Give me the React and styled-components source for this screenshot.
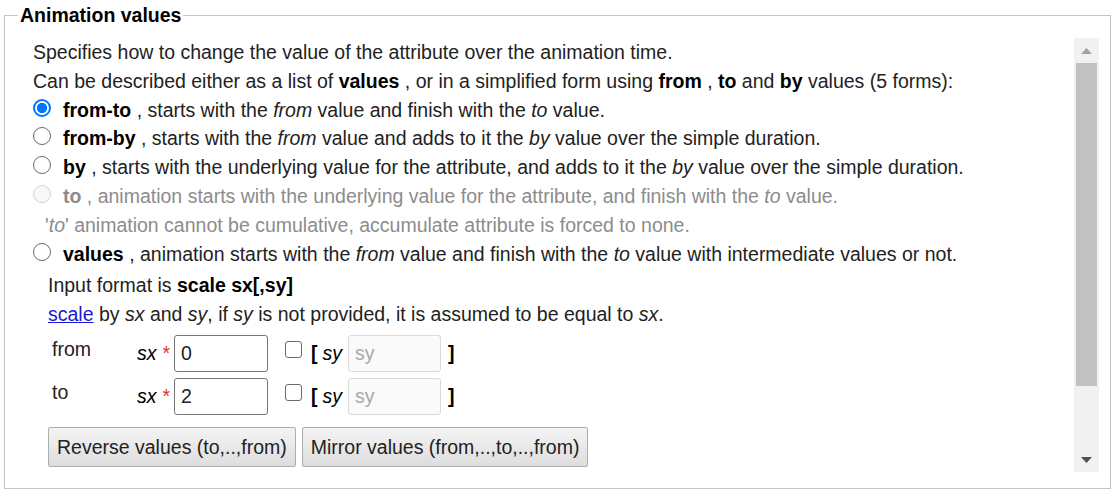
import React from "react";
import styled, { createGlobalStyle } from "styled-components";

const GlobalStyle = createGlobalStyle`
  html, body {
    margin: 0;
    padding: 0;
    background: #ffffff;
  }
  body {
    font-family: "Liberation Sans", Arial, sans-serif;
    font-size: 19.5px;
    color: #222222;
  }
`;

const Fieldset = styled.fieldset`
  margin: 0 5px 0 4px;
  padding: 8px 11px 16px 0;
  border: 1px solid #c4c4c4;
  min-width: 0;
`;

const Legend = styled.legend`
  margin-left: 13px;
  padding: 0 2px;
  font-weight: bold;
  line-height: 30px;
  color: #000;
`;

const ScrollArea = styled.div`
  display: flex;
  height: 434px;
`;

const Content = styled.div`
  flex: 1;
  overflow: hidden;
  padding-left: 28px;
  line-height: 28.8px;
`;

const Line = styled.div`
  white-space: nowrap;
  color: ${(p) => (p.$muted ? "#8c8c8c" : "#222222")};
  padding-left: ${(p) => p.$indent || 0}px;
`;

const Strong = styled.b`
  color: ${(p) => (p.$muted ? "#8c8c8c" : "#000")};
`;

const RadioRow = styled.label`
  display: flex;
  align-items: flex-start;
  white-space: nowrap;
  color: ${(p) => (p.$muted ? "#8c8c8c" : "#222222")};
`;

const RadioMark = styled.span`
  box-sizing: border-box;
  display: block;
  width: 18px;
  height: 18px;
  margin: 3px 12px 0 0;
  flex: none;
  border-radius: 50%;
  border: 1px solid ${(p) => (p.$disabled ? "#d4d4d4" : "#6a6a6a")};
  background: ${(p) => (p.$disabled ? "#f8f8f8" : "#fff")};
  ${(p) =>
    p.$checked &&
    `
    border: 2px solid #0075ff;
    background: radial-gradient(circle, #0075ff 0 4.8px, #fff 5.4px);
  `}
`;

const Details = styled.div`
  margin-top: 3px;
  padding-left: 15px;
`;

const Link = styled.a`
  color: #1a1ad6;
  text-decoration: underline;
`;

const FormRow = styled.div`
  display: flex;
  align-items: center;
  height: 37px;
  margin-top: ${(p) => p.$top}px;
  padding-left: 4px;
`;

const RowLabel = styled.span`
  align-self: flex-start;
  width: 85px;
  line-height: 28.8px;
`;

const Var = styled.i`
  color: #000;
`;

const Star = styled.span`
  color: #e8302a;
  margin: 0 4px 0 6px;
`;

const TextBox = styled.input`
  box-sizing: border-box;
  width: ${(p) => p.$w || 94}px;
  height: 37px;
  margin: 0 0 0 ${(p) => p.$l || 0}px;
  padding: 0 6px;
  border: 1px solid ${(p) => (p.disabled ? "#dadada" : "#767676")};
  border-radius: 3px;
  font: inherit;
  color: #222;
  background: ${(p) => (p.disabled ? "#fafafa" : "#fff")};
  &::placeholder {
    color: #a8a8a8;
  }
`;

const CheckMark = styled.span`
  box-sizing: border-box;
  display: block;
  align-self: flex-start;
  flex: none;
  width: 17px;
  height: 17px;
  margin: 6px 9px 0 17px;
  border: 1px solid #6a6a6a;
  border-radius: 3px;
  background: #fff;
`;

const Bracket = styled.b`
  color: #000;
  margin-right: ${(p) => p.$r || 0}px;
  margin-left: ${(p) => p.$l || 0}px;
`;

const ButtonRow = styled.div`
  display: flex;
  gap: 6px;
  margin-top: 12px;
`;

const Button = styled.button`
  height: 40px;
  padding: 0 8px;
  font: inherit;
  color: #222;
  border: 1px solid #adadad;
  border-radius: 2px;
  background: linear-gradient(#f4f4f4, #dddddd);
`;

const Scrollbar = styled.div`
  width: 25px;
  flex: none;
  display: flex;
  flex-direction: column;
  background: #f1f1f1;
`;

const ArrowBox = styled.div`
  height: 25px;
  display: flex;
  align-items: center;
  justify-content: center;
`;

const Thumb = styled.div`
  height: 323px;
  margin: 0 2px;
  background: #c1c1c1;
`;

const Track = styled.div`
  flex: 1;
`;

const Arrow = ({ down, color }) => (
  <svg width="11" height="6" viewBox="0 0 11 6">
    <path d={down ? "M0 0H11L5.5 6Z" : "M0 6H11L5.5 0Z"} fill={color} />
  </svg>
);

const ScaleRow = ({ label, value, top }) => (
  <FormRow $top={top}>
    <RowLabel>{label}</RowLabel>
    <Var>sx</Var>
    <Star>*</Star>
    <TextBox defaultValue={value} />
    <CheckMark role="checkbox" aria-checked="false" />
    <Bracket $r={5}>[</Bracket>
    <Var>sy</Var>
    <TextBox disabled placeholder="sy" $l={6} $w={93} />
    <Bracket $l={7}>]</Bracket>
  </FormRow>
);

const Option = ({ checked, disabled, children }) => (
  <RadioRow $muted={disabled}>
    <RadioMark role="radio" aria-checked={!!checked} $checked={checked} $disabled={disabled} />
    <span>{children}</span>
  </RadioRow>
);

export default function App() {
  return (
    <>
      <GlobalStyle />
      <Fieldset>
        <Legend>Animation values</Legend>
        <ScrollArea>
          <Content>
            <Line>Specifies how to change the value of the attribute over the animation time.</Line>
            <Line>
              Can be described either as a list of <Strong>values</Strong> , or in a simplified form
              using <Strong>from</Strong> , <Strong>to</Strong> and <Strong>by</Strong> values (5 forms):
            </Line>
            <Option checked>
              <Strong>from-to</Strong> , starts with the <i>from</i> value and finish with the <i>to</i> value.
            </Option>
            <Option>
              <Strong>from-by</Strong> , starts with the <i>from</i> value and adds to it the <i>by</i> value
              over the simple duration.
            </Option>
            <Option>
              <Strong>by</Strong> , starts with the underlying value for the attribute, and adds to it
              the <i>by</i> value over the simple duration.
            </Option>
            <Option disabled>
              <Strong $muted>to</Strong> , animation starts with the underlying value for the attribute,
              and finish with the <i>to</i> value.
            </Option>
            <Line $muted $indent={12}>
              '<i>to</i>' animation cannot be cumulative, accumulate attribute is forced to none.
            </Line>
            <Option>
              <Strong>values</Strong> , animation starts with the <i>from</i> value and finish with
              the <i>to</i> value with intermediate values or not.
            </Option>
            <Details>
              <Line>
                Input format is <Strong>scale sx[,sy]</Strong>
              </Line>
              <Line>
                <Link href="#scale">scale</Link> by <i>sx</i> and <i>sy</i>, if <i>sy</i> is not provided, it is
                assumed to be equal to <i>sx</i>.
              </Line>
              <ScaleRow label="from" value="0" top={6} />
              <ScaleRow label="to" value="2" top={6} />
              <ButtonRow>
                <Button>Reverse values (to,..,from)</Button>
                <Button>Mirror values (from,..,to,..,from)</Button>
              </ButtonRow>
            </Details>
          </Content>
          <Scrollbar>
            <ArrowBox>
              <Arrow color="#a3a3a3" />
            </ArrowBox>
            <Thumb />
            <Track />
            <ArrowBox>
              <Arrow down color="#505050" />
            </ArrowBox>
          </Scrollbar>
        </ScrollArea>
      </Fieldset>
    </>
  );
}
